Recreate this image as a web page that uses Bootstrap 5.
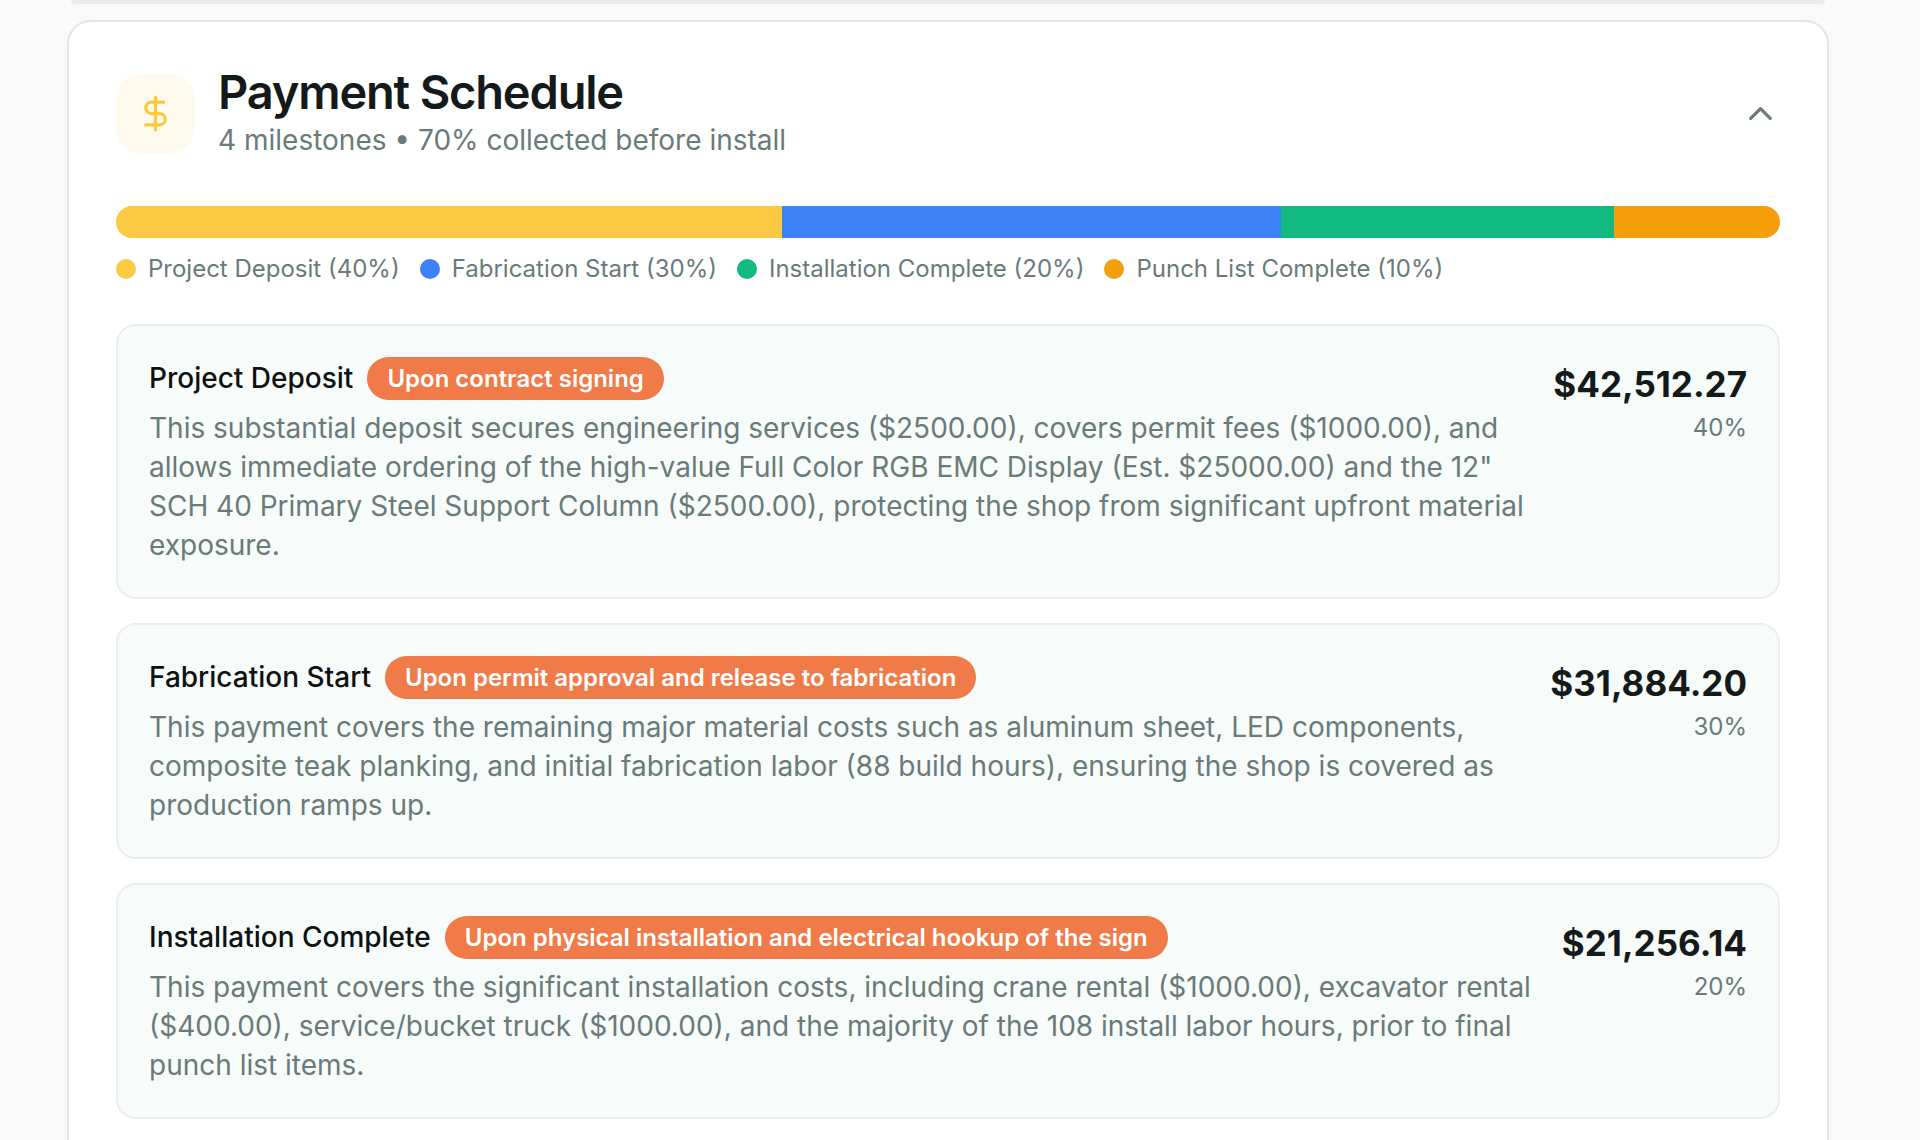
<!DOCTYPE html>
<html lang="en">
<head>
<meta charset="utf-8">
<meta name="viewport" content="width=device-width, initial-scale=1">
<title>Payment Schedule</title>
<link href="https://cdn.jsdelivr.net/npm/bootstrap@5.3.0/dist/css/bootstrap.min.css" rel="stylesheet">
<style>
body{font-family:Inter,"Liberation Sans",sans-serif;background:#fafafa;color:#141a19;overflow-x:hidden}
.page-wrap{padding:0 91px 48px 67px}
.prev-edge{height:4px;margin:0 4px 16px;background:#ebebeb;border-radius:0 0 24px 24px}
.schedule{background:#fff;border:2px solid #e3e5e5;border-radius:24px;padding:43px 47px 47px}
.icon-tile{width:79px;height:79px;border-radius:24px;background:#fffaee;color:#fbc840}
.sched-head{gap:23px}
.sched-title{font-size:47px;line-height:53px;font-weight:600;letter-spacing:-0.025em}
.muted-text{color:#697a78}
.body-text{font-size:28px;line-height:39px}
.sched-sub{font-size:28px;line-height:44px}
.small-text{font-size:24px;line-height:31px}
.split-bar{height:32px;border-radius:16px;margin-top:44px;margin-bottom:15px;background:#eee}
.legend-list{column-gap:20px}
.legend-list li{gap:12px}
.dot{width:20px;height:20px;border-radius:50%}
.c-gold{background:#fbc942}.c-blue{background:#3c82f6}.c-green{background:#12b981}.c-amber{background:#f59e0b}
.stack{gap:24px;margin-top:40px}
.milestone{background:#f7fbfa;border:2px solid #ebeeed;border-radius:20px;padding:31px 31px 32px;gap:16px}
.milestone-name{font-size:28px;line-height:39px;font-weight:500;color:#0d1110}
.pill{font-size:24px;line-height:31px;font-weight:600;padding:6px 20px;border-radius:22px;background:#f07b48;color:#fff}
.name-row{column-gap:14px;margin-bottom:9px}
.amount{font-size:35px;line-height:55px;font-weight:700}
</style>
<script src="https://cdn.jsdelivr.net/npm/bootstrap@5.3.0/dist/js/bootstrap.bundle.min.js"></script>
</head>
<body>
<main class="page-wrap">
  <div class="prev-edge"></div>
  <section class="schedule">
    <header class="sched-head d-flex align-items-center">
      <div class="icon-tile d-flex align-items-center justify-content-center flex-shrink-0">
        <svg width="39" height="39" viewBox="0 0 24 24" fill="none" stroke="currentColor" stroke-width="2" stroke-linecap="round" stroke-linejoin="round" aria-hidden="true"><path d="M12 2v20M17 5H9.500a3.500 3.500 0 0 0 0 7h5a3.500 3.500 0 0 1 0 7H6"/></svg>
      </div>
      <div class="flex-grow-1">
        <h2 class="sched-title mb-0">Payment Schedule</h2>
        <p class="sched-sub muted-text mb-0">4 milestones • 70% collected before install</p>
      </div>
      <button type="button" class="btn p-0 border-0 d-flex muted-text" aria-label="Collapse payment schedule" aria-expanded="true" aria-controls="schedule-body" data-bs-toggle="collapse" data-bs-target="#schedule-body">
        <svg width="39" height="39" viewBox="0 0 24 24" fill="none" stroke="currentColor" stroke-width="2" stroke-linecap="round" stroke-linejoin="round" aria-hidden="true"><path d="m18 15-6-6-6 6"/></svg>
      </button>
    </header>
    <div id="schedule-body" class="collapse show">
      <div class="split-bar d-flex overflow-hidden">
        <div class="c-gold" style="width:40%"></div>
        <div class="c-blue" style="width:30%"></div>
        <div class="c-green" style="width:20%"></div>
        <div class="c-amber" style="width:10%"></div>
      </div>
      <ul class="legend-list list-unstyled d-flex flex-wrap mb-0 small-text muted-text">
        <li class="d-flex align-items-center"><span class="dot c-gold"></span>Project Deposit (40%)</li>
        <li class="d-flex align-items-center"><span class="dot c-blue"></span>Fabrication Start (30%)</li>
        <li class="d-flex align-items-center"><span class="dot c-green"></span>Installation Complete (20%)</li>
        <li class="d-flex align-items-center"><span class="dot c-amber"></span>Punch List Complete (10%)</li>
      </ul>
      <div class="stack d-flex flex-column">
        <article class="milestone d-flex align-items-start">
          <div class="flex-grow-1">
            <div class="name-row d-flex flex-wrap align-items-center">
              <h3 class="milestone-name mb-0">Project Deposit</h3><span class="pill">Upon contract signing</span>
            </div>
            <p class="body-text muted-text mb-0">This substantial deposit secures engineering services ($2500.00), covers permit fees ($1000.00), and allows immediate ordering of the high-value Full Color RGB EMC Display (Est. $25000.00) and the 12" SCH 40 Primary Steel Support Column ($2500.00), protecting the shop from significant upfront material exposure.</p>
          </div>
          <div class="text-end flex-shrink-0">
            <div class="amount">$42,512.27</div>
            <div class="small-text muted-text">40%</div>
          </div>
        </article>
        <article class="milestone d-flex align-items-start">
          <div class="flex-grow-1">
            <div class="name-row d-flex flex-wrap align-items-center">
              <h3 class="milestone-name mb-0">Fabrication Start</h3><span class="pill">Upon permit approval and release to fabrication</span>
            </div>
            <p class="body-text muted-text mb-0">This payment covers the remaining major material costs such as aluminum sheet, LED components, composite teak planking, and initial fabrication labor (88 build hours), ensuring the shop is covered as production ramps up.</p>
          </div>
          <div class="text-end flex-shrink-0">
            <div class="amount">$31,884.20</div>
            <div class="small-text muted-text">30%</div>
          </div>
        </article>
        <article class="milestone d-flex align-items-start">
          <div class="flex-grow-1">
            <div class="name-row d-flex flex-wrap align-items-center">
              <h3 class="milestone-name mb-0">Installation Complete</h3><span class="pill">Upon physical installation and electrical hookup of the sign</span>
            </div>
            <p class="body-text muted-text mb-0">This payment covers the significant installation costs, including crane rental ($1000.00), excavator rental ($400.00), service/bucket truck ($1000.00), and the majority of the 108 install labor hours, prior to final punch list items.</p>
          </div>
          <div class="text-end flex-shrink-0">
            <div class="amount">$21,256.14</div>
            <div class="small-text muted-text">20%</div>
          </div>
        </article>
      </div>
    </div>
  </section>
</main>
</body>
</html>
